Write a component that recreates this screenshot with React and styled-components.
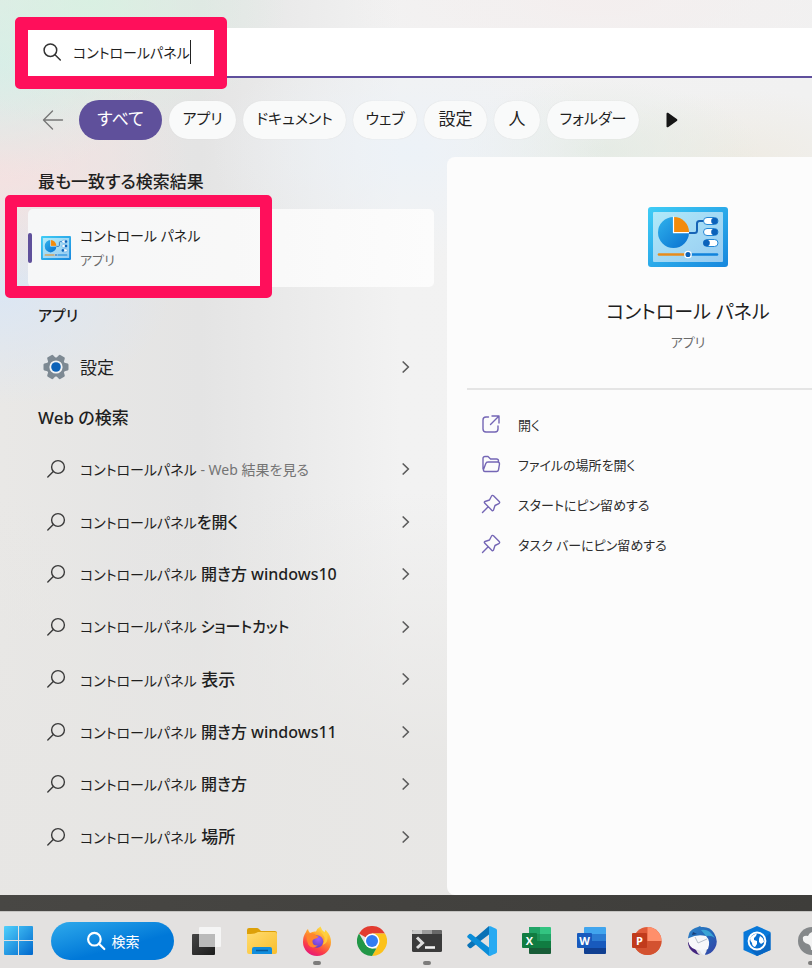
import React, { useState } from "react";
import styled, { createGlobalStyle, css } from "styled-components";

const Global = createGlobalStyle`
  * { box-sizing: border-box; }
  html, body { margin: 0; padding: 0; overflow: hidden; }
  body {
    font-family: "Noto Sans", "Noto Sans CJK JP", sans-serif;
    font-feature-settings: "palt";
    color: #1f1f1f;
    background: #e3e1e0;
  }
  button, input { font: inherit; font-feature-settings: inherit; color: inherit; }
`;

const Desktop = styled.div`
  display: flex;
  flex-direction: column;
  min-height: 100vh;
  overflow: hidden;
  background: linear-gradient(90deg, #484744, #3e3d3a);
`;

const SearchWindow = styled.main`
  flex: 1;
  display: flex;
  flex-direction: column;
  padding-top: 28px;
  margin-bottom: 16px;
  background:
    radial-gradient(ellipse 200px 130px at 90px 0, rgba(216, 241, 226, 0.9), transparent),
    radial-gradient(ellipse 150px 120px at 0 60px, rgba(214, 238, 234, 0.9), transparent),
    radial-gradient(ellipse 190px 120px at 0 165px, rgba(246, 224, 224, 0.9), transparent),
    radial-gradient(ellipse 170px 110px at 0 295px, rgba(218, 230, 245, 0.9), transparent),
    radial-gradient(ellipse 200px 110px at 410px 150px, rgba(236, 242, 248, 0.9), transparent),
    radial-gradient(ellipse 160px 70px at 600px 150px, rgba(226, 234, 226, 0.8), transparent),
    radial-gradient(ellipse 160px 70px at 740px 160px, rgba(238, 234, 224, 0.8), transparent),
    radial-gradient(ellipse 260px 80px at 600px 0, rgba(244, 238, 238, 0.9), transparent),
    linear-gradient(180deg, transparent 55%, rgba(231, 230, 228, 0.9) 85%),
    linear-gradient(90deg, #e9e8e6 0, #e4e4e4 200px, #f2f2f2 400px, #f1f1f1 100%);
`;

const SearchBar = styled.div`
  position: relative;
  display: flex;
  align-items: center;
  height: 50px;
  margin-left: 28px;
  padding-left: 14px;
  background: #fff;
  border-bottom: 2px solid #5f4f9c;
`;

const SearchInput = styled.input`
  field-sizing: content;
  margin-left: 11px;
  padding: 0;
  border: 0;
  outline: 0;
  background: none;
  font-size: 14px;
`;

const Caret = styled.span`
  width: 1px;
  height: 24px;
  background: #222;
`;

const Highlight = styled.div`
  position: absolute;
  pointer-events: none;
  border: 12px solid #ff0f5b;
  border-radius: 5px;
  z-index: 2;
  ${(p) =>
    p.$target === "search"
      ? css`left: -13px; top: -11px; width: 212px; height: 72px; border-width: 13px;`
      : css`left: -23px; top: -14px; width: 267px; height: 103px;`}
`;

const FilterBar = styled.nav`
  display: flex;
  align-items: center;
  gap: 7px;
  height: 79px;
  padding: 4px 0 0 42px;
`;

const IconButton = styled.button`
  display: flex;
  align-items: center;
  padding: 0;
  border: 0;
  background: none;
  margin-left: ${(p) => p.$before || 0}px;
  margin-right: ${(p) => p.$after || 0}px;
`;

const Chip = styled.button`
  flex: none;
  min-width: ${(p) => p.$width}px;
  height: ${(p) => (p.$active ? 40 : 38)}px;
  padding: 0 0 4px;
  border: 0;
  border-radius: 20px;
  white-space: nowrap;
  font-size: ${(p) => p.$size}px;
  background: ${(p) => (p.$active ? "#5f509b" : "#f9fafa")};
  color: ${(p) => (p.$active ? "#fff" : "#1f1f1f")};
  box-shadow: ${(p) => (p.$active ? "none" : "0 0 1px #d4d4d4")};
`;

const Body = styled.div`
  flex: 1;
  display: flex;
`;

const Results = styled.div`
  flex: none;
  width: 447px;
  display: flex;
  flex-direction: column;
  padding-bottom: 32px;
`;

const Heading = styled.h2`
  display: flex;
  align-items: center;
  height: ${(p) => p.$height}px;
  margin: 0;
  padding: 0 0 2px 38px;
  font-size: ${(p) => p.$size || 17}px;
  font-weight: 500;
`;

const BestMatch = styled.div`
  position: relative;
  height: 78px;
  margin: 4px 13px 0 28px;
`;

const BestMatchButton = styled.button`
  display: flex;
  align-items: center;
  width: 100%;
  height: 100%;
  padding: 0;
  border: 0;
  border-radius: 5px;
  background: linear-gradient(90deg, #f6f7f8, #f8f8f8 50%, #fcfcfc);
  text-align: left;
`;

const Accent = styled.span`
  width: 4px;
  height: 30px;
  border-radius: 2px;
  background: #5f509b;
`;

const Names = styled.span`
  display: flex;
  flex-direction: column;
  margin-left: 9px;
  padding-bottom: 2px;
`;

const AppName = styled.span`
  font-size: 14px;
  line-height: 25px;
`;

const AppKind = styled.span`
  font-size: 13px;
  line-height: 24px;
  color: #6b6b6b;
`;

const Suggestions = styled.ul`
  flex: 1;
  display: grid;
  grid-auto-rows: 1fr;
  margin: 0;
  padding: 0;
  list-style: none;
`;

const ResultRow = styled.button`
  display: flex;
  align-items: center;
  width: 100%;
  height: ${(p) => (p.$tall ? "48px" : "100%")};
  padding: 0 37px 0 42px;
  border: 0;
  background: none;
  text-align: left;
`;

const RowIcon = styled.span`
  display: flex;
  justify-content: center;
  width: 28px;
  margin-right: 10px;
`;

const RowText = styled.span`
  flex: 1;
  padding-bottom: 2px;
  font-size: 17px;
  white-space: pre;
`;

const Query = styled.span`
  font-size: 14px;
`;

const Strong = styled.strong`
  font-size: ${(p) => p.$size || 16}px;
  font-weight: 500;
`;

const Hint = styled.span`
  font-size: 14px;
  color: #747474;
`;

const Preview = styled.section`
  flex: 1 0 482px;
  display: flex;
  flex-direction: column;
  align-items: center;
  padding: 50px 20px 0;
  border-radius: 8px;
  background: #fcfcfc;
`;

const PreviewTitle = styled.h1`
  margin: 27px 0 0;
  font-size: 19px;
  line-height: 36px;
  font-weight: 400;
`;

const Divider = styled.hr`
  width: 100%;
  height: 2px;
  margin: 34px 0 15px;
  border: 0;
  background: #e5e5e5;
`;

const Actions = styled.div`
  width: 100%;
  padding-left: 14px;
`;

const Action = styled.button`
  display: flex;
  align-items: center;
  gap: 17px;
  width: 100%;
  height: 40px;
  padding: 0 0 2px;
  border: 0;
  background: none;
  font-size: 13px;
  color: #2d2d2d;
`;

const Taskbar = styled.footer`
  display: flex;
  align-items: center;
  height: 57px;
  padding: 1px 0 0 4px;
  background: #e3e1e0;
  border-top: 1px solid #c5c4c2;
`;

const TaskSearch = styled.button`
  display: flex;
  align-items: center;
  justify-content: center;
  gap: 6px;
  flex: none;
  width: 123px;
  height: 38px;
  margin: 0 5px 0 18px;
  padding: 0;
  border: 0;
  border-radius: 19px;
  color: #fff;
  font-size: 14px;
  background: linear-gradient(165deg, #2ba6ea 5%, #0078d8 62%);
`;

const TaskButton = styled.button`
  position: relative;
  display: flex;
  align-items: center;
  justify-content: center;
  flex: none;
  width: 55px;
  height: 54px;
  padding: 0;
  border: 0;
  background: none;
  ${(p) =>
    p.$running &&
    css`
      &::after {
        content: "";
        position: absolute;
        bottom: 3px;
        left: 24px;
        width: 8px;
        height: 4px;
        border-radius: 2px;
        background: #7d7c7b;
      }
    `}
`;

const StartButton = styled(IconButton)`
  flex: none;
`;

const line = { fill: "none", strokeLinecap: "round", strokeLinejoin: "round" };

const Magnifier = ({ size = 20, color = "#333", width = 1.5 }) => (
  <svg width={size} height={size} viewBox="0 0 20 20" {...line} stroke={color} strokeWidth={width}>
    <circle cx="8.4" cy="8.2" r="6.3" />
    <path d="M13 12.8 18.3 18" />
  </svg>
);

const FlippedMagnifier = () => (
  <svg width="20" height="20" viewBox="0 0 20 20" {...line} stroke="#3a3a3a" strokeWidth="1.4">
    <circle cx="12" cy="8" r="6.4" />
    <path d="M7.3 12.6 1.8 18" />
  </svg>
);

const Chevron = () => (
  <svg width="8" height="12" viewBox="0 0 8 12" {...line} stroke="#5c5c5c" strokeWidth="1.7">
    <path d="m1.2 1 5.200 5-5.200 5" />
  </svg>
);

const BackArrow = () => (
  <svg width="22" height="20" viewBox="0 0 22 20" {...line} stroke="#777" strokeWidth="1.4">
    <path d="M20.5 10H1.5M10.5 1 1.5 10l9 9" />
  </svg>
);

const Play = () => (
  <svg width="12" height="16" viewBox="0 0 12 16">
    <path d="M.5 1.8C.5.7 1.5.3 2.4 1l8.4 6c.8.6.8 1.4 0 2l-8.4 6C1.5 15.7.5 15.3.5 14.200Z" fill="#161616" />
  </svg>
);

const Gear = () => (
  <svg width="26" height="26" viewBox="0 0 26 26">
    <g fill="#7d8993">
      <circle cx="13" cy="13" r="9.5" />
      {[30, 90, 150, 210, 270, 330].map((a) => (
        <path key={a} transform={`rotate(${a} 13 13)`} d="M8.600 5.500 9.600 1.400Q9.800.5 10.700.5h4.600q.9 0 1.100.9L17.400 5.500Z" />
      ))}
    </g>
    <circle cx="13" cy="13" r="6.6" fill="#f1f3f5" />
    <circle cx="13" cy="13" r="4.8" fill="#0c62b8" />
  </svg>
);

const ControlPanel = ({ id, width, height }) => (
  <svg width={width} height={height} viewBox="0 0 80 60" preserveAspectRatio="none">
    <defs>
      <linearGradient id={`${id}-frame`} x1="0" y1="0" x2="1" y2="1">
        <stop offset="0" stopColor="#3fcdf6" />
        <stop offset="1" stopColor="#1787dd" />
      </linearGradient>
      <linearGradient id={`${id}-face`} x1="0" y1="0" x2="1" y2="1">
        <stop offset="0" stopColor="#afe9f9" />
        <stop offset="1" stopColor="#97cbf1" />
      </linearGradient>
      <linearGradient id={`${id}-pie`} x1="0" y1="0" x2="1" y2="1">
        <stop offset="0" stopColor="#2fb2ec" />
        <stop offset="1" stopColor="#0870d0" />
      </linearGradient>
    </defs>
    <rect width="80" height="60" rx="3" fill={`url(#${id}-frame)`} />
    <rect x="5" y="5" width="70" height="50" rx="1" fill={`url(#${id}-face)`} />
    <path d="M25.5 10A15.500 15.500 0 1 0 41 25.500H25.500Z" fill={`url(#${id}-pie)`} />
    <path d="M26 25V10a15 15 0 0 1 15 15Z" fill="#f38b0c" />
    <path d="M25.500 9.500v16.200H41.500" fill="none" stroke="#fff" strokeWidth="1.2" />
    <path d="M41 26h5.500q2.500 0 2.500-2.500v-7q0-2.500 2.500-2.500H56" fill="none" stroke="#1764b6" strokeWidth="2" />
    {[[14, 66.5], [25, 66.5], [36, 58.5]].map(([y, x]) => (
      <g key={y}>
        <rect x="55.5" y={y - 3.5} width="14.5" height="7" rx="3.5" fill="#fff" stroke="#2387d6" strokeWidth="1" />
        <circle cx={x} cy={y} r="3.3" fill="#0b62ba" />
      </g>
    ))}
    <path d="M11 47.500h25" stroke="#e78c1c" strokeWidth="2.6" strokeLinecap="round" />
    <path d="M44 47.500h25" stroke="#1183dc" strokeWidth="2.6" strokeLinecap="round" />
    <circle cx="40" cy="47.5" r="3.2" fill="#0b62ba" stroke="#fff" strokeWidth="1.3" />
  </svg>
);

const ActionIcon = ({ children }) => (
  <svg width="20" height="20" viewBox="0 0 20 20" {...line} stroke="#7466b5" strokeWidth="1.4">
    {children}
  </svg>
);

const OpenIcon = () => (
  <ActionIcon>
    <path d="M7.500 3H5a3 3 0 0 0-3 3v9a3 3 0 0 0 3 3h9a3 3 0 0 0 3-3v-3M11 2h7v7M18 2 9.500 10.500" />
  </ActionIcon>
);
const FolderIcon = () => (
  <ActionIcon>
    <path d="M2 15V4.500a2 2 0 0 1 2-2h3l2.500 2.500h6a2 2 0 0 1 2 2V8M4 17.500H15.500a2 2 0 0 0 2-1.700l1-5.800A2 2 0 0 0 16.500 8H7a2.400 2.400 0 0 0-2.300 1.800L2.500 15.500Q2.300 17.500 4 17.500Z" />
  </ActionIcon>
);
const PinIcon = () => (
  <ActionIcon>
    <path d="m12.500 1.800 5.700 5.700c.8.8.5 1.700-.4 2.100L14 11.500 12.500 16c-.3.8-1 .9-1.500.4L3.600 9c-.5-.5-.4-1.200.4-1.500L8.500 6l1.900-3.800c.4-.9 1.300-1.200 2.100-.4ZM7.200 12.800 1.500 18.500" />
  </ActionIcon>
);

const StartLogo = () => (
  <svg width="29" height="29" viewBox="0 0 29 29">
    <defs>
      <linearGradient id="start" x1="0" y1="0" x2="1" y2="1">
        <stop offset="0" stopColor="#4fd0fc" />
        <stop offset="1" stopColor="#0067cc" />
      </linearGradient>
    </defs>
    <path d="M1 0h13v14H0V1Q0 0 1 0ZM15 0h13q1 0 1 1v13H15ZM0 15h14v14H1q-1 0-1-1ZM15 15h14v13q0 1-1 1H15Z" fill="url(#start)" />
  </svg>
);

const Svg = ({ children }) => (
  <svg width="30" height="30" viewBox="0 0 30 30">
    {children}
  </svg>
);

const TaskViewIcon = () => (
  <Svg>
    <defs>
      <linearGradient id="tv" x1="0" y1="0" x2="1" y2="1">
        <stop offset="0" stopColor="#454545" />
        <stop offset="1" stopColor="#1c1c1c" />
      </linearGradient>
    </defs>
    <rect x="0" y="8" width="23" height="21" rx="1" fill="url(#tv)" />
    <rect x="7" y="1" width="22" height="20" rx="1" fill="#f5f5f5" />
    <path d="M7 8h16v13H7Z" fill="#bababa" />
  </Svg>
);

const ExplorerIcon = () => (
  <Svg>
    <defs>
      <linearGradient id="folder" x1="0" y1="0" x2="1" y2="1">
        <stop offset="0" stopColor="#ffdc70" />
        <stop offset="1" stopColor="#f9be2d" />
      </linearGradient>
    </defs>
    <path d="M0 4q0-2 2-2h8q1 0 2 1l2 2h14q2 0 2 2v5H0Z" fill="#dda008" />
    <path d="M0 8q7 0 9-1l2-1h17q2 0 2 2v18q0 2-2 2H2q-2 0-2-2Z" fill="url(#folder)" />
    <path d="M5 28v-5q0-2 2-2h16q2 0 2 2v5Z" fill="#118ddd" />
    <path d="M9 24.500h12" stroke="#075a9b" strokeWidth="1.5" />
  </Svg>
);

const FirefoxIcon = () => (
  <Svg>
    <defs>
      <linearGradient id="fx" x1=".8" y1="0" x2=".3" y2="1">
        <stop offset="0" stopColor="#fff04a" />
        <stop offset=".4" stopColor="#ff9a2b" />
        <stop offset=".75" stopColor="#fb3c49" />
        <stop offset="1" stopColor="#e3157c" />
      </linearGradient>
      <radialGradient id="fx-globe" cx=".6" cy=".3" r=".8">
        <stop offset="0" stopColor="#a35bf5" />
        <stop offset="1" stopColor="#5b3cc0" />
      </radialGradient>
    </defs>
    <path d="M4 6q.5-2 2-3 .3 2.500 2 4 3-2 6-1.500Q15.500 2 18.500.5 19 4 22.500 6.500 23 5 23.500 4q5.500 5 5.500 12a14 14 0 0 1-28 0Q1 10 4 6Z" fill="url(#fx)" />
    <circle cx="15" cy="15.5" r="6.2" fill="url(#fx-globe)" />
    <path d="M4.500 9q4-3 8.500-1 1 2 3.500 2.500-1 1.800-3.500 2.200-3 .8-2.500 3.300Q11 20 16 19.500 10 23.500 6.500 19 4 14 4.500 9Z" fill="#ff852c" />
    <path d="M18.500.5q-1 4 2 7.500 4 5 0 11 6-2 5-9-.5-5-2-6-.5 1-1 2.500Q19 4 18.500.5Z" fill="#ffd23e" opacity=".8" />
  </Svg>
);

const ChromeIcon = () => (
  <Svg>
    <path d="M15 15 2 7.500A15 15 0 0 1 28 7.500H15Z" fill="#e23b30" />
    <path d="M15 7.500h13A15 15 0 0 1 15 30l6.500-11.200Z" fill="#fcc21b" />
    <path d="M2 7.500 8.500 18.800 15 22.500h4.400L15 30A15 15 0 0 1 2 7.500Z" fill="#229747" />
    <circle cx="15" cy="15" r="7.5" fill="#fff" />
    <circle cx="15" cy="15" r="6" fill="#327cf2" />
  </Svg>
);

const TerminalIcon = () => (
  <Svg>
    <rect y="4" width="30" height="22" rx="1.5" fill="#3b3b3b" />
    <path d="M0 8V5.500Q0 4 1.500 4H10v4Z" fill="#cacaca" />
    <path d="M10 4h10v4H10Z" fill="#9c9c9c" />
    <path d="M20 4h8.500Q30 4 30 5.500V8H20Z" fill="#686868" />
    <path d="m5 11.500 5.500 5.500L5 22" fill="none" stroke="#ddd" strokeWidth="3" />
    <path d="M13 21.500h10" stroke="#f2f2f2" strokeWidth="2.6" />
  </Svg>
);

const CodeIcon = () => (
  <Svg>
    <path d="M22 0 .8 18.300q-1.200 1 0 2.200l1.500 1.400q.9.700 1.900 0L22 8.500Z" fill="#0a72b6" />
    <path d="M22 30 .8 11.700q-1.200-1 0-2.200l1.500-1.400q.9-.7 1.900 0L22 21.500Z" fill="#0b8dd8" />
    <path d="M22 .3q.8-.3 1.600 0L29 2.800q1 .5 1 1.500v21.400q0 1-1 1.500l-5.400 2.500q-1 .4-1.600 0Z" fill="#28aaf2" />
  </Svg>
);

const Letter = styled.text`
  font-family: "Open Sans", "Noto Sans", sans-serif;
  font-size: 11px;
  font-weight: 700;
  fill: #fff;
  text-anchor: middle;
`;

const ExcelIcon = () => (
  <Svg>
    <path d="M7 1h11v9H7Z" fill="#21a366" />
    <path d="M18 1h10q1 0 1 1v6H18Z" fill="#33c481" />
    <path d="M7 8h11v7H7Z" fill="#1c9155" />
    <path d="M18 8h11v7H18Z" fill="#21a366" />
    <path d="M7 15h22v7H7Z" fill="#107c41" />
    <path d="M7 22h22v5q0 1-1 1H8q-1 0-1-1Z" fill="#185c37" />
    <rect y="7" width="15" height="15" rx="1" fill="#107c41" />
    <Letter x="7.5" y="18.5">X</Letter>
  </Svg>
);

const WordIcon = () => (
  <Svg>
    <path d="M8 1h20q1 0 1 1v6H7V2q0-1 1-1Z" fill="#41a5ee" />
    <path d="M7 8h22v7H7Z" fill="#2b7cd3" />
    <path d="M7 15h22v7H7Z" fill="#185abd" />
    <path d="M7 22h22v5q0 1-1 1H8q-1 0-1-1Z" fill="#103f91" />
    <rect y="7" width="15" height="15" rx="1" fill="#185abd" />
    <Letter x="7.5" y="18.5">W</Letter>
  </Svg>
);

const PowerPointIcon = () => (
  <Svg>
    <circle cx="15.5" cy="15" r="14" fill="#e05a38" />
    <path d="M15.500 1a14 14 0 0 1 14 14h-14Z" fill="#ff8f6b" />
    <path d="M1.500 15h28a14 14 0 0 1-28 0Z" fill="#d35230" />
    <rect y="7" width="15" height="15" rx="1" fill="#c13b1c" />
    <Letter x="7.5" y="18.5">P</Letter>
  </Svg>
);

const ThunderbirdIcon = () => (
  <Svg>
    <defs>
      <linearGradient id="tb" x1="0" y1="0" x2="1" y2="1">
        <stop offset="0" stopColor="#2f83c8" />
        <stop offset=".5" stopColor="#2367b8" />
        <stop offset="1" stopColor="#3840a5" />
      </linearGradient>
    </defs>
    <path d="M1 12Q2 4 8 2l3-1 2-1 1 1q9-1 13 6 5 8 1 15-4 7-11 7 4-4 3-9Z" fill="url(#tb)" />
    <path d="M14 4q8-2 14 8-4-3-9-2Z" fill="#39a3d5" />
    <path d="M1 16q0 6 5 10 4 3 7 3-3-2-4-5Z" fill="#43247e" />
    <path d="M2 12q8-4 17-2 5 5 2 13-5 3-10 1-7-1-9-6Z" fill="#f7f7fa" />
    <path d="m8 11 3 6 9-4" fill="none" stroke="#b5bdca" strokeWidth="1" />
    <path d="m6 6 4 2-5 1Z" fill="#173e77" />
    <path d="m13 24 6-1-1 6q-4 0-5-5Z" fill="#eff2f8" />
  </Svg>
);

const HexGlobeIcon = () => (
  <Svg>
    <path d="M15 0 28.500 6v18L15 30 1.500 24V6Z" fill="#0878d9" />
    <path d="M28.500 7v17L15 30l-7-7Z" fill="#0866c3" />
    <circle cx="15" cy="15" r="8.4" fill="#086fd0" stroke="#fff" strokeWidth="2" />
    <path d="M8 12q3-4 7-4.500L14 10l-2 2v2l3 1v3l-2 3q-3-1-3-4-2-2-2-5ZM18 10q4 2 4 6l-3 2-2-2v-3Z" fill="#fff" />
  </Svg>
);

const GrayGlobeIcon = () => (
  <Svg>
    <circle cx="15" cy="15" r="14" fill="#85888a" />
    <path d="M6 11q2-2 5-1 1-3 4-4 7 1 10 8-3 6-8 4 1 5-3 6 0-5-3-6-6-1-5-7Z" fill="#f3f3f3" />
  </Svg>
);

const FILTERS = [
  ["すべて", 83, 17],
  ["アプリ", 67, 15],
  ["ドキュメント", 103, 15],
  ["ウェブ", 64, 15],
  ["設定", 63, 17],
  ["人", 46, 17],
  ["フォルダー", 92, 15],
];

const SUGGESTIONS = [
  ["を開く"],
  [" 開き方 windows10"],
  [" ショートカット", 15],
  [" 表示", 17],
  [" 開き方 windows11"],
  [" 開き方"],
  [" 場所", 17],
];

const ACTIONS = [
  ["開く", OpenIcon],
  ["ファイルの場所を開く", FolderIcon],
  ["スタートにピン留めする", PinIcon],
  ["タスク バーにピン留めする", PinIcon],
];

const APPS = [
  ["タスク ビュー", TaskViewIcon, false],
  ["エクスプローラー", ExplorerIcon, false],
  ["Firefox", FirefoxIcon, true],
  ["Chrome", ChromeIcon, false],
  ["ターミナル", TerminalIcon, true],
  ["Visual Studio Code", CodeIcon, false],
  ["Excel", ExcelIcon, false],
  ["Word", WordIcon, false],
  ["PowerPoint", PowerPointIcon, false],
  ["Thunderbird", ThunderbirdIcon, false],
  ["ブラウザー", HexGlobeIcon, false],
  ["ネットワーク", GrayGlobeIcon, true],
];

const Result = ({ icon, tall, children }) => (
  <ResultRow $tall={tall}>
    <RowIcon>{icon}</RowIcon>
    <RowText>{children}</RowText>
    <Chevron />
  </ResultRow>
);

export default function App() {
  const [query, setQuery] = useState("コントロールパネル");
  const [filter, setFilter] = useState("すべて");

  return (
    <>
      <Global />
      <Desktop>
        <SearchWindow>
          <SearchBar>
            <Magnifier />
            <SearchInput aria-label="検索" value={query} onChange={(e) => setQuery(e.target.value)} />
            <Caret />
            <Highlight $target="search" />
          </SearchBar>
          <FilterBar>
            <IconButton aria-label="戻る" $after={8}>
              <BackArrow />
            </IconButton>
            {FILTERS.map(([label, width, size]) => (
              <Chip key={label} $width={width} $size={size} $active={label === filter} onClick={() => setFilter(label)}>
                {label}
              </Chip>
            ))}
            <IconButton aria-label="次へ" $before={20}>
              <Play />
            </IconButton>
          </FilterBar>
          <Body>
            <Results>
              <Heading $height={48}>最も一致する検索結果</Heading>
              <BestMatch>
                <BestMatchButton>
                  <Accent />
                  <IconButton as="span" $before={9}>
                    <ControlPanel id="small" width={30} height={24} />
                  </IconButton>
                  <Names>
                    <AppName>コントロール パネル</AppName>
                    <AppKind>アプリ</AppKind>
                  </Names>
                </BestMatchButton>
                <Highlight $target="match" />
              </BestMatch>
              <Heading $height={56} $size={15}>アプリ</Heading>
              <Result tall icon={<Gear />}>
                設定
              </Result>
              <Heading $height={52}>Web の検索</Heading>
              <Suggestions>
                <li>
                  <Result icon={<FlippedMagnifier />}>
                    <Query>コントロールパネル</Query>
                    <Hint> - Web 結果を見る</Hint>
                  </Result>
                </li>
                {SUGGESTIONS.map(([rest, size]) => (
                  <li key={rest}>
                    <Result icon={<FlippedMagnifier />}>
                      <Query>コントロールパネル</Query>
                      <Strong $size={size}>{rest}</Strong>
                    </Result>
                  </li>
                ))}
              </Suggestions>
            </Results>
            <Preview>
              <ControlPanel id="large" width={80} height={60} />
              <PreviewTitle>コントロール パネル</PreviewTitle>
              <AppKind>アプリ</AppKind>
              <Divider />
              <Actions>
                {ACTIONS.map(([label, Icon]) => (
                  <Action key={label}>
                    <Icon />
                    {label}
                  </Action>
                ))}
              </Actions>
            </Preview>
          </Body>
        </SearchWindow>
        <Taskbar>
          <StartButton aria-label="スタート">
            <StartLogo />
          </StartButton>
          <TaskSearch>
            <Magnifier color="#fff" width={2.2} />
            検索
          </TaskSearch>
          {APPS.map(([name, Icon, running]) => (
            <TaskButton key={name} aria-label={name} $running={running}>
              <Icon />
            </TaskButton>
          ))}
        </Taskbar>
      </Desktop>
    </>
  );
}
